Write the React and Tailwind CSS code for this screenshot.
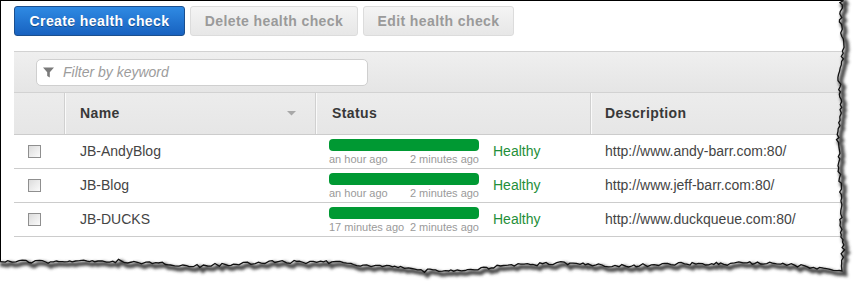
import React from "react";

function rng(seed) {
  let s = seed;
  return () => {
    s = (s * 16807) % 2147483647;
    return (s - 1) / 2147483646;
  };
}

function interp(pts, t) {
  for (let i = 0; i < pts.length - 1; i++) {
    const [a, av] = pts[i];
    const [b, bv] = pts[i + 1];
    const lo = Math.min(a, b);
    const hi = Math.max(a, b);
    if (t >= lo && t <= hi) {
      const f = (t - a) / (b - a || 1);
      return av + (bv - av) * f;
    }
  }
  return pts[pts.length - 1][1];
}

function buildEdge() {
  const r = rng(12345);
  const right = [
    [-3, 842], [20, 840], [50, 843], [80, 839], [100, 841], [140, 838],
    [180, 840], [220, 841], [250, 843], [268, 841],
  ];
  const bottom = [
    [842, 270], [820, 268], [780, 264], [753, 263], [720, 264], [680, 264],
    [620, 266], [560, 263], [520, 265], [470, 269], [420, 271], [400, 268],
    [330, 262], [267, 262], [200, 266], [167, 264], [120, 261], [60, 262],
    [0, 261], [-3, 261],
  ];
  const pts = [];
  for (let y = -3; y < 268; y += 2 + r() * 2) {
    pts.push([interp(right, y) + (r() - 0.5) * 3.2, y]);
  }
  for (let x = 842; x > -3; x -= 2 + r() * 2.5) {
    pts.push([x, interp(bottom, x) + (r() - 0.5) * 3.2]);
  }
  pts.push([-3, 261]);
  const line = pts.map((p, i) => `${i ? "L" : "M"}${p[0].toFixed(1)},${p[1].toFixed(1)}`).join(" ");
  const fill = `${line} L-10,300 L870,300 L870,-10 L842,-10 Z`;
  return { line, fill };
}

const EDGE = buildEdge();

function TornEdge() {
  return (
    <svg className="absolute left-0 top-0 pointer-events-none" width="857" height="282" viewBox="0 0 857 282">
      <defs>
        <filter id="blur" x="-10%" y="-10%" width="120%" height="120%">
          <feGaussianBlur stdDeviation="1.6" />
        </filter>
      </defs>
      <path d={EDGE.fill} fill="#ffffff" />
      <path d={EDGE.line} fill="none" stroke="#4a4a4a" strokeWidth="4.5" transform="translate(3,3)" filter="url(#blur)" />
      <path d={EDGE.line} fill="none" stroke="#111" strokeWidth="1.3" />
    </svg>
  );
}

function Checkbox() {
  return (
    <div className="w-[13px] h-[13px] border border-[#8f8f8f] bg-gradient-to-br from-[#dcdcdc] to-[#fbfbfb]" />
  );
}

const rows = [
  { name: "JB-AndyBlog", first: "an hour ago", url: "http://www.andy-barr.com:80/" },
  { name: "JB-Blog", first: "an hour ago", url: "http://www.jeff-barr.com:80/" },
  { name: "JB-DUCKS", first: "17 minutes ago", url: "http://www.duckqueue.com:80/" },
];

export default function App() {
  return (
    <div className="relative w-[857px] h-[282px] bg-white overflow-hidden" style={{ fontFamily: '"Liberation Sans", Arial, sans-serif' }}>
      <div className="w-[857px] h-[282px] border-l border-t border-black pl-[13px] pt-[5px]">
        <div className="flex items-center">
          <button className="w-[171px] h-[30px] rounded-[3px] border border-[#1b4f8e] bg-gradient-to-b from-[#2f8ae3] to-[#1862c0] text-white font-bold text-[14px] tracking-[0.4px] [text-shadow:0_1px_0_rgba(0,0,0,0.35)]">
            Create health check
          </button>
          <button className="ml-[5px] w-[168px] h-[30px] rounded-[3px] border border-[#dcdcdc] bg-gradient-to-b from-[#f4f4f4] to-[#e7e7e7] text-[#9a9a9a] font-bold text-[14px] tracking-[0.4px]">
            Delete health check
          </button>
          <button className="ml-[5px] w-[151px] h-[30px] rounded-[3px] border border-[#dcdcdc] bg-gradient-to-b from-[#f4f4f4] to-[#e7e7e7] text-[#9a9a9a] font-bold text-[14px] tracking-[0.4px]">
            Edit health check
          </button>
        </div>

        <div className="mt-[15px] h-[42px] border-t border-b border-[#d2d2d2] bg-gradient-to-b from-[#efefef] to-[#e5e5e5] pl-[22px] pt-[7px]">
          <div className="w-[332px] h-[27px] rounded-[5px] border border-[#cfcfcf] bg-white flex items-center pl-[6px]">
            <svg width="11" height="11" viewBox="0 0 11 11" className="mr-[9px]">
              <path d="M0 0.5 H11 L6.8 5.3 V10.5 L4.2 9 V5.3 Z" fill="#7a7a7a" />
            </svg>
            <span className="italic text-[14px] text-[#9c9c9c]">Filter by keyword</span>
          </div>
        </div>

        <div className="grid grid-cols-[50px_251px_275px_1fr] h-[42px] border-b border-[#cccccc] bg-gradient-to-b from-[#ececec] to-[#e6e6e6] text-[14px] font-bold tracking-[0.4px] text-[#383838]">
          <div />
          <div className="flex items-center justify-between pl-[15px] pr-[19px] border-l border-[#d0d0d0] shadow-[inset_1px_0_0_#fafafa]">
            <span>Name</span>
            <svg width="9" height="5" viewBox="0 0 9 5">
              <path d="M0 0 H9 L4.5 4.5 Z" fill="#a8a8a8" />
            </svg>
          </div>
          <div className="flex items-center pl-[16px] border-l border-[#d0d0d0] shadow-[inset_1px_0_0_#fafafa]">Status</div>
          <div className="flex items-center pl-[14px] border-l border-[#d0d0d0] shadow-[inset_1px_0_0_#fafafa]">Description</div>
        </div>

        {rows.map((r) => (
          <div key={r.name} className="grid grid-cols-[50px_251px_275px_1fr] h-[34px] border-b border-[#cccccc] text-[14px] text-[#444]">
            <div className="flex items-center pl-[14px]">
              <Checkbox />
            </div>
            <div className="flex items-center pl-[16px]">{r.name}</div>
            <div className="flex items-center pl-[14px]">
              <div className="w-[150px] flex flex-col pt-[1px]">
                <div className="h-[12px] rounded-[4px] bg-[#009933]" />
                <div className="flex justify-between text-[11px] leading-[12px] mt-[2px] text-[#9a9a9a]">
                  <span>{r.first}</span>
                  <span>2 minutes ago</span>
                </div>
              </div>
              <span className="ml-[14px] text-[#1f8f3a]">Healthy</span>
            </div>
            <div className="flex items-center pl-[15px]">{r.url}</div>
          </div>
        ))}
      </div>
      <TornEdge />
    </div>
  );
}
